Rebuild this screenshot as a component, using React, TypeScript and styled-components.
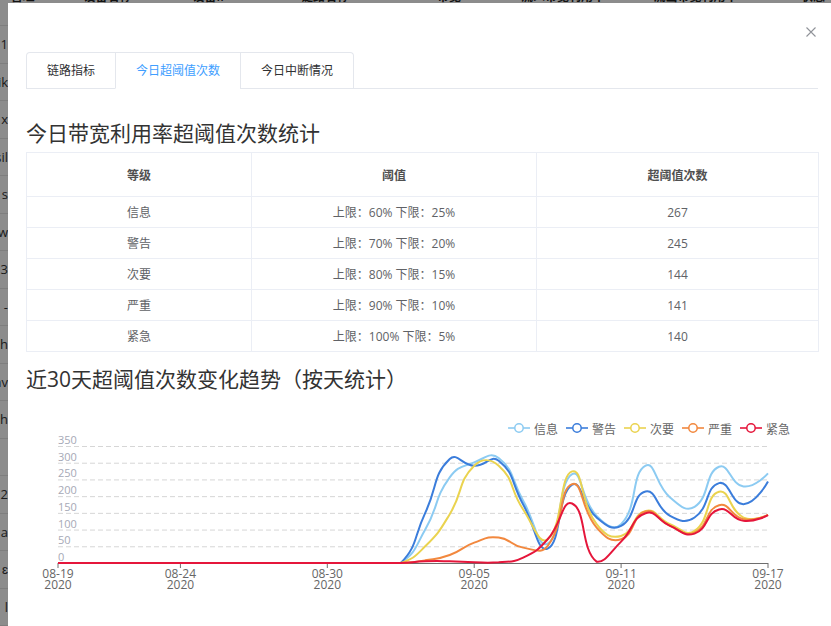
import React from 'react';
import styled, { createGlobalStyle } from 'styled-components';

const GlobalStyle = createGlobalStyle`
  html, body {
    margin: 0;
    padding: 0;
  }
  body {
    font-family: "Open Sans", "Noto Sans CJK SC", sans-serif;
    font-size: 12px;
    color: #606266;
  }
`;

const Page = styled.div`
  position: relative;
  width: 831px;
  height: 626px;
  overflow: hidden;
  background: #fff;
`;

// ---- page behind the modal ----

const BgHead = styled.div`
  display: flex;
  height: 26px;
  border-bottom: 1px solid #e6e6e6;
  box-sizing: border-box;
`;

const BgHeadCell = styled.div<{ $w: number }>`
  width: ${(p) => p.$w}px;
  flex: none;
  text-align: center;
  line-height: 12px;
  margin-top: -9px;
  color: #222;
  font-weight: 600;
  white-space: nowrap;
`;

const BgRow = styled.div`
  display: flex;
  align-items: center;
  height: 37.5px;
  border-bottom: 1px solid #e6e6e6;
  box-sizing: border-box;
`;

const BgCell = styled.div`
  width: 8px;
  overflow: hidden;
  display: flex;
  justify-content: flex-end;
  white-space: nowrap;
  font-size: 13px;
  color: #333;
`;

const Overlay = styled.div`
  position: absolute;
  inset: 0;
  background: rgba(0, 0, 0, 0.45);
`;

// ---- dialog ----

const Dialog = styled.div`
  position: absolute;
  left: 8px;
  top: 3px;
  width: 828px;
  bottom: -40px;
  background: #fff;
  box-sizing: border-box;
  padding: 49px 18px 0;
`;

const CloseButton = styled.button`
  position: absolute;
  right: 20px;
  top: 24px;
  width: 10px;
  height: 10px;
  padding: 0;
  border: none;
  background: none;
  display: flex;
  cursor: pointer;
`;

const TabHeader = styled.div`
  display: flex;
  border-bottom: 1px solid #e4e7ed;
`;

const TabNav = styled.div`
  display: flex;
  border: 1px solid #e4e7ed;
  border-bottom: none;
  border-radius: 4px 4px 0 0;
  margin-bottom: -1px;
`;

const Tab = styled.div<{ $active?: boolean }>`
  height: 35px;
  line-height: 35px;
  padding: 0 20px;
  font-size: 12px;
  color: ${(p) => (p.$active ? '#409eff' : '#303133')};
  border-bottom: 1px solid ${(p) => (p.$active ? '#fff' : 'transparent')};
  & + & {
    border-left: 1px solid #e4e7ed;
  }
`;

const SectionTitle = styled.h2<{ $top: number; $bottom: number }>`
  margin: ${(p) => p.$top}px 0 ${(p) => p.$bottom}px;
  font-size: 21px;
  line-height: 30px;
  font-weight: 400;
  color: #333;
  white-space: nowrap;
`;

const StatTable = styled.table`
  width: 100%;
  border-collapse: collapse;
  table-layout: fixed;
`;

const HeadCell = styled.th`
  height: 43px;
  padding: 0;
  border: 1px solid #ebeef5;
  font-size: 12px;
  font-weight: 600;
  color: #505050;
  text-align: center;
`;

const BodyCell = styled.td`
  height: 30px;
  padding: 0;
  border: 1px solid #ebeef5;
  font-size: 12px;
  color: #606266;
  text-align: center;
`;

const ChartBox = styled.div`
  margin-top: 7px;
  height: 240px;
`;

// ---- data ----

const bgHead = [
  { w: 45, t: '管理' },
  { w: 125, t: '设备名称' },
  { w: 80, t: '设备IP' },
  { w: 150, t: '链路名称' },
  { w: 98, t: '带宽' },
  { w: 130, t: '流入带宽利用率' },
  { w: 135, t: '流出带宽利用率' },
  { w: 100, t: '状态' },
];

const bgRows = ['1', 'sik', 'x', 'sil', 's', 'w', '3', '-', 'h', 'hv', 'h', '', '12', 'a', 'ɛ', 'l'];

const levels = [
  { name: '信息', range: '上限：60% 下限：25%', count: 267 },
  { name: '警告', range: '上限：70% 下限：20%', count: 245 },
  { name: '次要', range: '上限：80% 下限：15%', count: 144 },
  { name: '严重', range: '上限：90% 下限：10%', count: 141 },
  { name: '紧急', range: '上限：100% 下限：5%', count: 140 },
];

const zeros = Array(15).fill(0);

const series = [
  {
    name: '信息',
    color: '#8ccbf2',
    data: [...zeros, 100, 256, 301, 314, 186, 58, 266, 141, 116, 291, 196, 168, 288, 229, 268],
  },
  {
    name: '警告',
    color: '#3b7ddb',
    data: [...zeros, 150, 311, 291, 306, 175, 43, 234, 136, 111, 214, 141, 136, 239, 176, 244],
  },
  {
    name: '次要',
    color: '#ead34f',
    data: [...zeros, 50, 146, 291, 291, 160, 71, 274, 116, 81, 156, 116, 96, 213, 136, 144],
  },
  {
    name: '严重',
    color: '#f2883e',
    data: [...zeros, 8, 24, 61, 76, 46, 51, 236, 106, 71, 154, 111, 91, 173, 131, 144],
  },
  {
    name: '紧急',
    color: '#e5163b',
    data: [...zeros, 5, 5, 2, 2, 16, 71, 178, 4, 64, 149, 111, 88, 160, 126, 143],
  },
];

const xLabels: Record<number, string> = {
  0: '08-19',
  5: '08-24',
  11: '08-30',
  17: '09-05',
  23: '09-11',
  29: '09-17',
};

const W = 792;
const GRID_L = 32;
const GRID_R = 742;
const Y0 = 162;
const Y_TOP = 45;
const MAX = 350;

const px = (i: number) => GRID_L + ((GRID_R - GRID_L) / 29) * i;
const py = (v: number) => Y0 - ((Y0 - Y_TOP) / MAX) * v;

// echarts-like smooth line, control points kept inside the plot
function smoothPath(values: number[], smooth = 0.5) {
  const pts = values.map((v, i) => ({ x: px(i), y: py(v) }));
  const clampY = (y: number) => Math.min(Y0, Math.max(Y_TOP - 10, y));
  let d = `M${pts[0].x.toFixed(2)},${pts[0].y.toFixed(2)}`;
  let cp0x = pts[0].x;
  let cp0y = pts[0].y;
  for (let i = 0; i < pts.length - 1; i++) {
    const p = pts[i + 1];
    let cp1x = p.x;
    let cp1y = p.y;
    let nx = p.x;
    let ny = p.y;
    if (i + 2 < pts.length) {
      const prev = pts[i];
      const next = pts[i + 2];
      const vx = next.x - prev.x;
      const vy = next.y - prev.y;
      const l0 = Math.hypot(p.x - prev.x, p.y - prev.y);
      const l1 = Math.hypot(next.x - p.x, next.y - p.y);
      const r = l1 / (l0 + l1);
      cp1x = p.x - vx * smooth * (1 - r);
      cp1y = clampY(p.y - vy * smooth * (1 - r));
      nx = p.x + vx * smooth * r;
      ny = clampY(p.y + vy * smooth * r);
    }
    d += ` C${cp0x.toFixed(2)},${cp0y.toFixed(2)} ${cp1x.toFixed(2)},${cp1y.toFixed(2)} ${p.x.toFixed(2)},${p.y.toFixed(2)}`;
    cp0x = nx;
    cp0y = ny;
  }
  return d;
}

function TrendChart() {
  const ticks = [0, 50, 100, 150, 200, 250, 300, 350];
  return (
    <svg width={W} height={240} viewBox={`0 0 ${W} 240`}>
      {series.map((s, i) => {
        const cx = 493 + i * 58;
        return (
          <g key={s.name}>
            <line x1={cx - 11} y1={27} x2={cx + 11} y2={27} stroke={s.color} strokeWidth={1.6} />
            <circle cx={cx} cy={27} r={4.2} fill="#fff" stroke={s.color} strokeWidth={1.5} />
            <text
              x={cx + 15}
              y={27}
              fontSize={12}
              fill="#666"
              dominantBaseline="central"
              fontFamily='"Noto Sans CJK SC", sans-serif'
            >
              {s.name}
            </text>
          </g>
        );
      })}

      {ticks.map((t) => (
        <g key={t}>
          {t > 0 && (
            <line
              x1={GRID_L}
              x2={GRID_R}
              y1={py(t) + 0.5}
              y2={py(t) + 0.5}
              stroke="#d6d6d6"
              strokeDasharray="5 3"
            />
          )}
          <text x={GRID_L} y={py(t) - 2} fontSize={11} fill="#a6a9b6" fontFamily='"Open Sans", sans-serif'>
            {t}
          </text>
        </g>
      ))}

      <line x1={GRID_L} x2={GRID_R} y1={Y0 + 0.5} y2={Y0 + 0.5} stroke="#6e6e6e" />
      {Object.entries(xLabels).map(([k, label]) => {
        const x = px(Number(k));
        return (
          <g key={k}>
            <line x1={x} x2={x} y1={Y0} y2={Y0 + 5} stroke="#6e6e6e" />
            <text x={x} y={177} fontSize={12} fill="#666" textAnchor="middle" fontFamily='"Open Sans", sans-serif'>
              {label}
            </text>
            <text x={x} y={188} fontSize={12} fill="#666" textAnchor="middle" fontFamily='"Open Sans", sans-serif'>
              2020
            </text>
          </g>
        );
      })}

      {series.map((s) => (
        <path
          key={s.name}
          d={smoothPath(s.data)}
          fill="none"
          stroke={s.color}
          strokeWidth={2}
          strokeLinejoin="round"
        />
      ))}
    </svg>
  );
}

export default function App() {
  return (
    <Page>
      <GlobalStyle />
      <BgHead>
        {bgHead.map((c) => (
          <BgHeadCell key={c.t} $w={c.w}>
            {c.t}
          </BgHeadCell>
        ))}
      </BgHead>
      {bgRows.map((t, i) => (
        <BgRow key={i}>
          <BgCell>{t}</BgCell>
        </BgRow>
      ))}
      <Overlay />

      <Dialog>
        <CloseButton aria-label="关闭">
          <svg width="10" height="10" viewBox="0 0 10 10">
            <path d="M0.5 0.5 L9.5 9.5 M9.5 0.5 L0.5 9.5" stroke="#909399" strokeWidth="1.1" />
          </svg>
        </CloseButton>

        <TabHeader>
          <TabNav>
            <Tab>链路指标</Tab>
            <Tab $active>今日超阈值次数</Tab>
            <Tab>今日中断情况</Tab>
          </TabNav>
        </TabHeader>

        <SectionTitle $top={29} $bottom={4}>今日带宽利用率超阈值次数统计</SectionTitle>
        <StatTable>
          <colgroup>
            <col style={{ width: 225 }} />
            <col style={{ width: 285 }} />
            <col style={{ width: 282 }} />
          </colgroup>
          <thead>
            <tr>
              <HeadCell>等级</HeadCell>
              <HeadCell>阈值</HeadCell>
              <HeadCell>超阈值次数</HeadCell>
            </tr>
          </thead>
          <tbody>
            {levels.map((l) => (
              <tr key={l.name}>
                <BodyCell>{l.name}</BodyCell>
                <BodyCell>{l.range}</BodyCell>
                <BodyCell>{l.count}</BodyCell>
              </tr>
            ))}
          </tbody>
        </StatTable>

        <SectionTitle $top={12} $bottom={0}>近30天超阈值次数变化趋势（按天统计）</SectionTitle>
        <ChartBox>
          <TrendChart />
        </ChartBox>
      </Dialog>
    </Page>
  );
}
